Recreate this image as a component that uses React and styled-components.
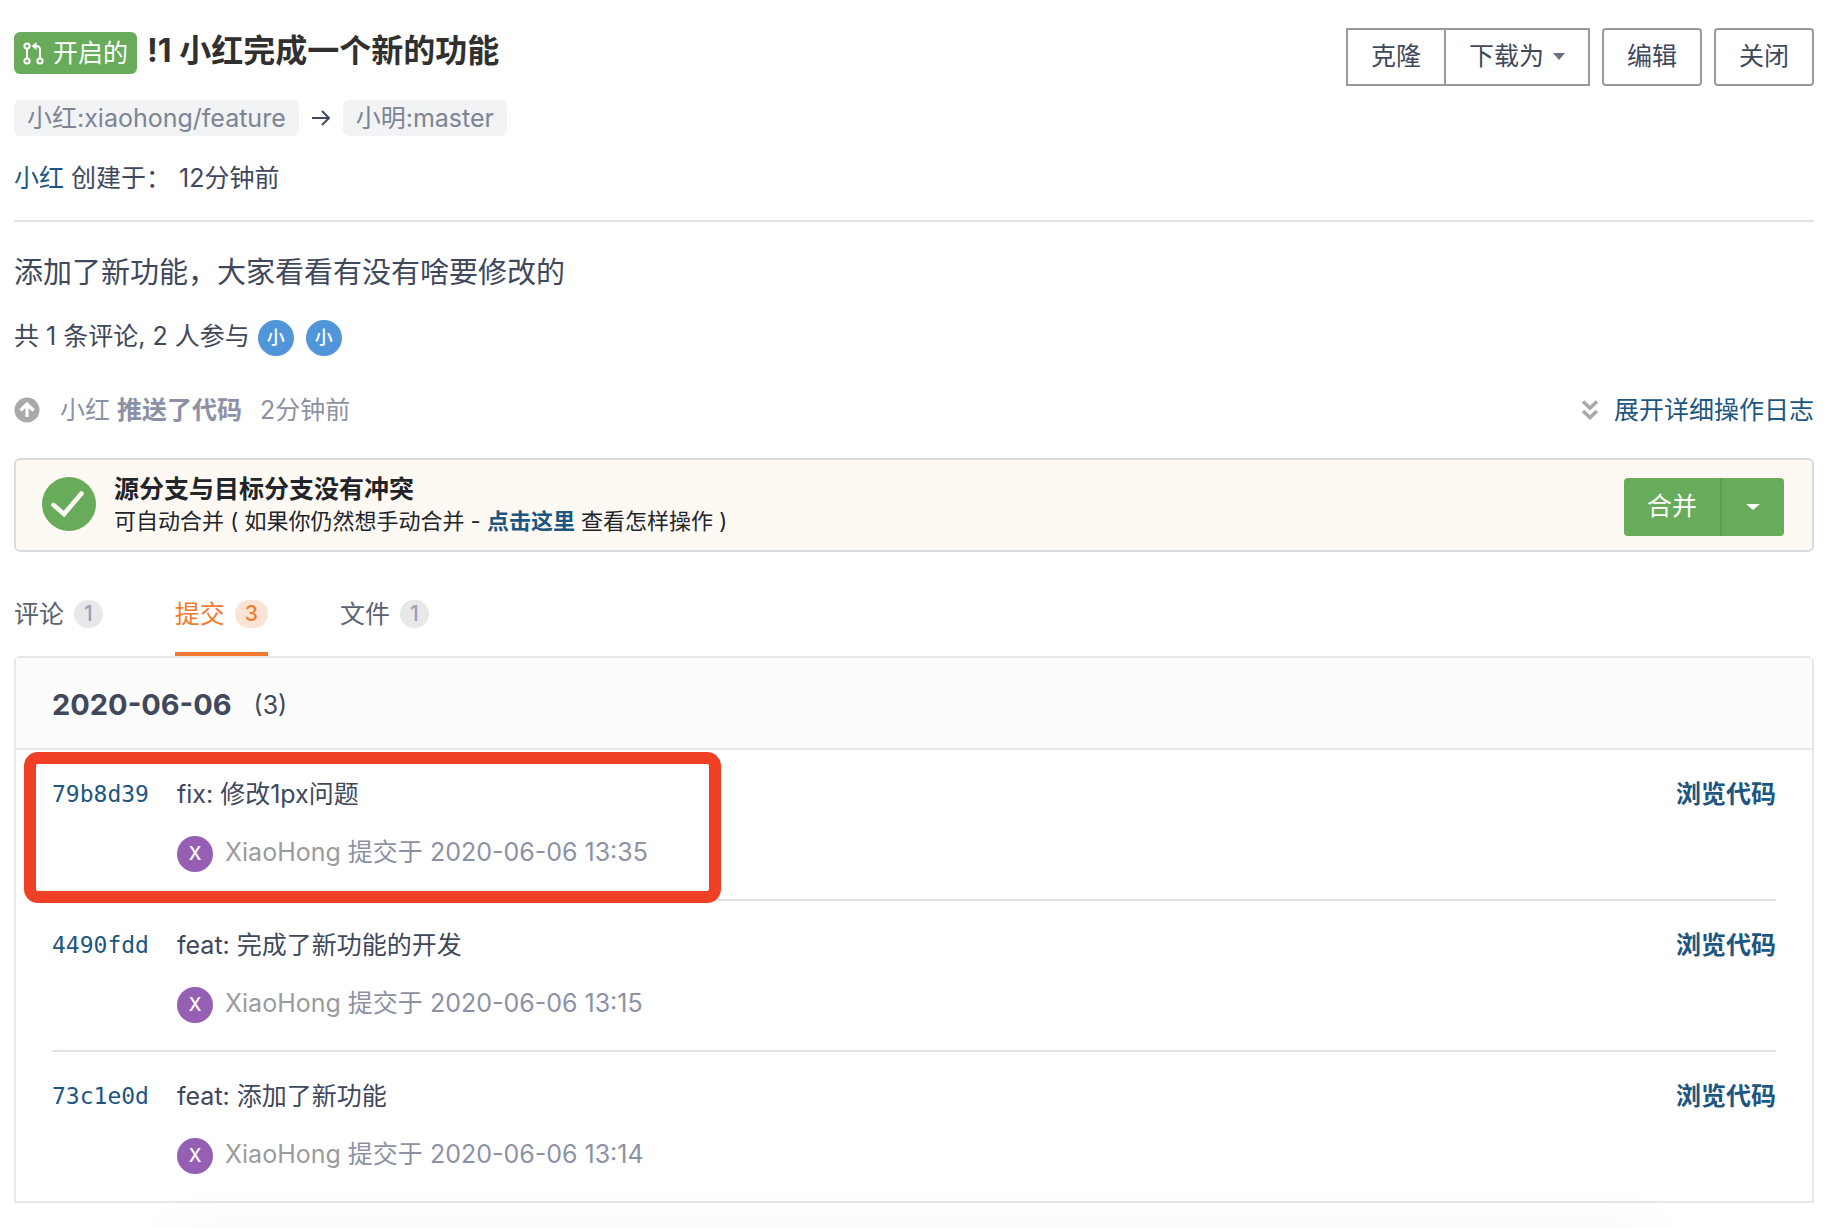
import React from "react";
import styled, { createGlobalStyle } from "styled-components";

const sans = `Inter, "Noto Sans CJK SC", sans-serif`;
const mono = `"DejaVu Sans Mono", "Liberation Mono", monospace`;

const commits = [
  { hash: "79b8d39", message: "fix: 修改1px问题", time: "2020-06-06 13:35", marked: true },
  { hash: "4490fdd", message: "feat: 完成了新功能的开发", time: "2020-06-06 13:15" },
  { hash: "73c1e0d", message: "feat: 添加了新功能", time: "2020-06-06 13:14" },
];

const tabs = [
  { name: "评论", count: 1 },
  { name: "提交", count: 3, active: true },
  { name: "文件", count: 1 },
];

function PullRequestIcon() {
  return (
    <svg width="22" height="24" viewBox="0 0 22 24" fill="none" stroke="#fff" strokeWidth="2">
      <circle cx="4" cy="5" r="2.6" />
      <circle cx="4" cy="20" r="2.6" />
      <circle cx="17" cy="20" r="2.6" />
      <path d="M4 8v9M17 17V9q0-4-4-4h-2" />
      <path d="M13.500 1v8L8.500 5z" fill="#fff" stroke="none" />
    </svg>
  );
}

function ArrowIcon() {
  return (
    <svg width="20" height="20" viewBox="0 0 20 20" fill="none" stroke="#40485b" strokeWidth="2">
      <path d="M1 10h17M11 3l7 7-7 7" />
    </svg>
  );
}

function PushIcon() {
  return (
    <svg width="26" height="26" viewBox="0 0 26 26">
      <circle cx="13" cy="13" r="12.500" fill="#a9a9a9" />
      <path
        d="M13 20V7M6.500 13.500L13 7l6.500 6.500"
        fill="none"
        stroke="#fff"
        strokeWidth="3.200"
      />
    </svg>
  );
}

function DoubleDownIcon() {
  return (
    <svg width="18" height="22" viewBox="0 0 18 22" fill="none" stroke="#a9a9a9" strokeWidth="3.600">
      <path d="M2 2.500l7 6.500 7-6.500M2 12l7 6.500 7-6.500" />
    </svg>
  );
}

function CheckIcon() {
  return (
    <svg width="54" height="54" viewBox="0 0 54 54">
      <circle cx="27" cy="27" r="27" fill="#67ab5b" />
      <path
        d="M11.500 28L22 37L39.500 16.500"
        fill="none"
        stroke="#fef9f3"
        strokeWidth="4.600"
        strokeLinecap="round"
      />
    </svg>
  );
}

export default function App() {
  return (
    <Page>
      <GlobalStyle />
      <Header>
        <Heading>
          <TitleRow>
            <StateBadge>
              <PullRequestIcon />
              开启的
            </StateBadge>
            <Title>!1 小红完成一个新的功能</Title>
          </TitleRow>
          <Branches>
            <Branch>小红:xiaohong/feature</Branch>
            <ArrowIcon />
            <Branch>小明:master</Branch>
          </Branches>
          <Author>
            <Link href="#xiaohong">小红</Link> 创建于：
            <time>12分钟前</time>
          </Author>
        </Heading>
        <Actions>
          <ButtonGroup>
            <GroupButton type="button">克隆</GroupButton>
            <GroupButton type="button">
              下载为
              <Caret />
            </GroupButton>
          </ButtonGroup>
          <Button type="button">编辑</Button>
          <Button type="button">关闭</Button>
        </Actions>
      </Header>

      <Description>添加了新功能，大家看看有没有啥要修改的</Description>
      <Participants>
        <RaisedText>共 1 条评论, 2 人参与</RaisedText>
        <Avatars>
          <Avatar $color="#5096d8">小</Avatar>
          <Avatar $color="#5096d8">小</Avatar>
        </Avatars>
      </Participants>

      <LogRow>
        <PushIcon />
        <LogText>
          小红 <b>推送了代码</b>
          <time>2分钟前</time>
        </LogText>
        <ExpandLink href="#log">
          <DoubleDownIcon />
          展开详细操作日志
        </ExpandLink>
      </LogRow>

      <MergeBox>
        <CheckIcon />
        <MergeText>
          <MergeTitle>源分支与目标分支没有冲突</MergeTitle>
          <MergeHint>
            可自动合并 ( 如果你仍然想手动合并 - <BoldLink href="#manual">点击这里</BoldLink> 查看怎样操作 )
          </MergeHint>
        </MergeText>
        <MergeButtons>
          <MergeButton type="button">合并</MergeButton>
          <MergeToggle type="button" aria-label="合并方式">
            <Caret $light />
          </MergeToggle>
        </MergeButtons>
      </MergeBox>

      <Tabs>
        {tabs.map((tab) => (
          <Tab key={tab.name} href={`#${tab.name}`} $active={tab.active}>
            {tab.name}
            <Count $active={tab.active}>{tab.count}</Count>
          </Tab>
        ))}
      </Tabs>

      <Panel>
        <PanelHeader>
          <PanelDate>2020-06-06</PanelDate>
          <span>(3)</span>
        </PanelHeader>
        <CommitList>
          {commits.map((commit) => (
            <Commit key={commit.hash}>
              <Hash href={`#${commit.hash}`}>{commit.hash}</Hash>
              <CommitBody>
                <div>{commit.message}</div>
                <Meta>
                  <Avatar $color="#955fb3">X</Avatar>
                  <RaisedText>
                    <Committer>XiaoHong</Committer> 提交于 {commit.time}
                  </RaisedText>
                </Meta>
              </CommitBody>
              <BoldLink href={`#tree-${commit.hash}`}>浏览代码</BoldLink>
              {commit.marked && <Marker />}
            </Commit>
          ))}
        </CommitList>
      </Panel>
      <BottomShade />
    </Page>
  );
}

const GlobalStyle = createGlobalStyle`
  * {
    box-sizing: border-box;
  }

  body {
    margin: 0;
    background: #fff;
    color: #40485b;
    font-family: ${sans};
    font-size: 25px;
    line-height: 36px;
  }

  svg {
    flex-shrink: 0;
  }
`;

const Page = styled.main`
  padding: 28px 20px 0 14px;
  overflow: hidden;
`;

const Header = styled.header`
  display: flex;
  justify-content: space-between;
  align-items: flex-start;
  padding-bottom: 24px;
  border-bottom: 2px solid #dfe3e8;
`;

const Heading = styled.div`
  display: flex;
  flex-direction: column;
  gap: 24px;
`;

const TitleRow = styled.div`
  display: flex;
  align-items: flex-end;
  gap: 10px;
  padding-bottom: 2px;
`;

const StateBadge = styled.span`
  display: flex;
  align-items: center;
  gap: 8px;
  height: 42px;
  padding: 0 9px;
  border-radius: 6px;
  background: #67ab5b;
  color: #fff;
`;

const Title = styled.h1`
  margin: 0;
  color: #303030;
  font-size: 32px;
  font-weight: 700;
  line-height: 46px;
`;

const Branches = styled.div`
  display: flex;
  align-items: center;
  gap: 12px;
`;

const Branch = styled.span`
  padding: 0 13px;
  border-radius: 6px;
  background: #f1f3f5;
  color: #7d8494;
`;

const Author = styled.div`
  time {
    margin-left: 8px;
  }
`;

const Link = styled.a`
  color: #1d5680;
  text-decoration: none;
`;

const BoldLink = styled(Link)`
  font-weight: 700;
`;

const Actions = styled.div`
  display: flex;
  gap: 12px;
`;

const Button = styled.button`
  height: 58px;
  padding: 0 23px 2px;
  border: 2px solid #999;
  border-radius: 4px;
  background: #fff;
  color: #40485b;
  font: inherit;
  cursor: pointer;
`;

const ButtonGroup = styled.div`
  display: flex;
`;

const GroupButton = styled(Button)`
  display: flex;
  align-items: center;
  gap: 9px;
  border-radius: 0;

  & + & {
    margin-left: -2px;
  }
`;

const Caret = styled.span`
  border: 6px solid transparent;
  border-top: 7px solid #697080;
  border-bottom: 0;

  ${(props) => props.$light && "border-width: 6px 7px 0; border-top-color: #fff;"}
`;

const Description = styled.p`
  margin: 33px 0 0;
  font-size: 29px;
`;

const Participants = styled.div`
  display: flex;
  align-items: center;
  gap: 8px;
  margin-top: 29px;
`;

const RaisedText = styled.span`
  padding-bottom: 4px;
  line-height: 32px;
`;

const Avatars = styled.div`
  display: flex;
  gap: 12px;
`;

const Avatar = styled.span`
  width: 36px;
  height: 36px;
  border-radius: 50%;
  background: ${(props) => props.$color};
  color: #fff;
  font-size: 18px;
  font-weight: 500;
  text-align: center;
`;

const LogRow = styled.div`
  display: flex;
  align-items: center;
  gap: 20px;
  margin-top: 36px;
`;

const LogText = styled.div`
  flex: 1;
  color: #8c92a4;

  time {
    margin-left: 18px;
  }
`;

const ExpandLink = styled(Link)`
  display: flex;
  align-items: center;
  gap: 15px;
`;

const MergeBox = styled.section`
  display: flex;
  align-items: center;
  gap: 18px;
  margin-top: 30px;
  padding: 12px 28px 14px 26px;
  border: 2px solid #dadbdc;
  border-radius: 6px;
  background: #fef9f3;
  color: #212529;
`;

const MergeText = styled.div`
  flex: 1;
`;

const MergeTitle = styled.div`
  font-weight: 700;
  line-height: 34px;
`;

const MergeHint = styled.div`
  font-size: 22px;
  line-height: 30px;
`;

const MergeButtons = styled.div`
  display: flex;
  align-self: flex-end;
`;

const MergeButton = styled.button`
  height: 58px;
  padding: 0 23px 2px;
  border: 0;
  border-radius: 4px 0 0 4px;
  background: #67ab5b;
  color: #fff;
  font: inherit;
  cursor: pointer;
`;

const MergeToggle = styled(MergeButton)`
  display: flex;
  align-items: center;
  padding: 0 24px;
  border-left: 2px solid #5c9d51;
  border-radius: 0 4px 4px 0;
`;

const Tabs = styled.nav`
  display: flex;
  gap: 72px;
  margin-top: 44px;
`;

const Tab = styled.a`
  display: flex;
  align-items: center;
  gap: 10px;
  padding-bottom: 20px;
  border-bottom: 4px solid ${(props) => (props.$active ? "#f2792f" : "transparent")};
  color: ${(props) => (props.$active ? "#f2792f" : "#5a6170")};
  text-decoration: none;
`;

const Count = styled.span`
  padding: 0 10px;
  border-radius: 14px;
  background: ${(props) => (props.$active ? "#fbe4d5" : "#e8e8e8")};
  color: ${(props) => (props.$active ? "#f2792f" : "#96a0b8")};
  font-size: 21px;
  font-weight: 500;
  line-height: 28px;
`;

const Panel = styled.section`
  border: 2px solid #e3e8ec;
  border-radius: 6px 6px 0 0;
`;

const PanelHeader = styled.header`
  display: flex;
  align-items: center;
  gap: 22px;
  padding: 29px 36px 25px;
  border-bottom: 2px solid #e3e8ec;
  background: #fcfcfc;
`;

const PanelDate = styled.h2`
  margin: 0;
  font-size: 29px;
  font-weight: 700;
`;

const CommitList = styled.ul`
  margin: 0;
  padding: 0 36px;
  list-style: none;
`;

const Commit = styled.li`
  position: relative;
  display: flex;
  align-items: flex-start;
  padding: 26px 0 27px;

  & + & {
    border-top: 2px solid #dfe3e8;
  }
`;

const Hash = styled(Link)`
  width: 125px;
  font-family: ${mono};
  font-size: 23px;
`;

const CommitBody = styled.div`
  flex: 1;
`;

const Meta = styled.div`
  display: flex;
  align-items: center;
  gap: 12px;
  margin-top: 24px;
  color: #8c92a4;
`;

const Committer = styled.span`
  color: #9b9b9b;
`;

/* Red frame around the commit being pointed out */
const Marker = styled.div`
  position: absolute;
  z-index: 1;
  top: 2px;
  left: -28px;
  width: 697px;
  height: 151px;
  border: 12px solid #ef3f24;
  border-radius: 14px;
  pointer-events: none;
`;

/* Faint shadow rising from below the page */
const BottomShade = styled.div`
  height: 40px;
  margin: 25px 160px -40px;
  box-shadow: 0 0 60px rgba(0, 0, 0, 0.04);
`;
